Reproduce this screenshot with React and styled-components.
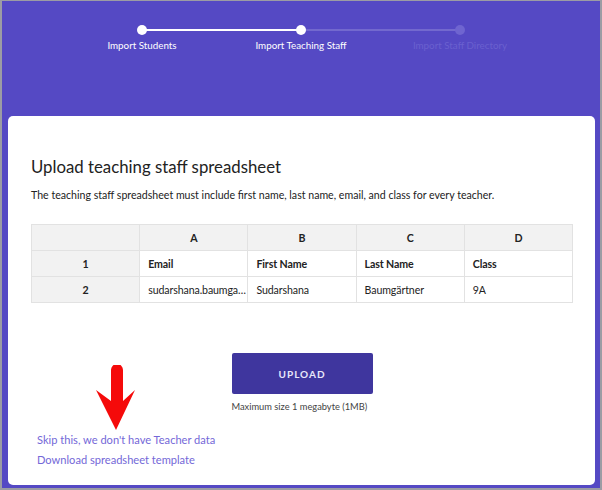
import styled, { createGlobalStyle } from 'styled-components';

const GlobalStyle = createGlobalStyle`
  * { box-sizing: border-box; }
  body {
    margin: 0;
    font-family: Lato, "Open Sans", sans-serif;
  }
`;

const Frame = styled.div`
  width: 602px;
  height: 490px;
  border: 2px solid #9c9ca4;
  border-top-width: 1px;
  background-color: #5549c4;
  display: flex;
  flex-direction: column;
  overflow: hidden;
`;

const Stepper = styled.div`
  display: flex;
  justify-content: center;
  padding-top: 24px;
  height: 115px;
`;

const Step = styled.div`
  position: relative;
  width: 159px;
  display: flex;
  flex-direction: column;
  align-items: center;
`;

const Track = styled.div`
  position: absolute;
  top: 4px;
  left: 50%;
  width: 159px;
  height: 2px;
  background-color: ${(p) => (p.done ? '#ffffff' : 'rgba(255, 255, 255, 0.18)')};
`;

const Dot = styled.span`
  position: relative;
  z-index: 1;
  width: 10px;
  height: 10px;
  border-radius: 50%;
  background-color: ${(p) => (p.active ? '#ffffff' : '#6f65d0')};
`;

const StepLabel = styled.span`
  margin-top: 4px;
  font-size: 9.8px;
  color: ${(p) => (p.active ? '#ffffff' : '#6a60cf')};
  white-space: nowrap;
`;

const Card = styled.div`
  position: relative;
  flex: 1;
  margin: 0 5px 3px 6px;
  background: #ffffff;
  border-radius: 5px;
  padding: 40px 22px 0 23px;
`;

const Title = styled.h1`
  margin: 0;
  font-size: 16.8px;
  font-weight: 400;
  color: #222222;
`;

const Description = styled.p`
  margin: 12px 0 0;
  font-size: 10.6px;
  color: #222222;
`;

const Sheet = styled.table`
  margin-top: 23px;
  width: 542px;
  table-layout: fixed;
  border-collapse: collapse;
  font-size: 10.6px;
  letter-spacing: -0.1px;
  color: #222222;
`;

const Cell = styled.td`
  height: 26px;
  border: 1px solid #e2e2e2;
  padding: 0 ${(p) => (p.center ? '0' : '8px')};
  text-align: ${(p) => (p.center ? 'center' : 'left')};
  font-weight: ${(p) => (p.bold ? 700 : 400)};
  background-color: ${(p) => (p.shade ? '#f2f2f2' : '#ffffff')};
  white-space: nowrap;
`;

const UploadArea = styled.div`
  display: flex;
  justify-content: center;
  margin-top: 50px;
`;

const UploadBlock = styled.div`
  display: flex;
  flex-direction: column;
  align-items: flex-start;
`;

const UploadButton = styled.button`
  width: 141px;
  height: 41px;
  border: none;
  border-radius: 2px;
  background-color: #3f369e;
  color: #e8e6fa;
  font-family: inherit;
  font-size: 10px;
  font-weight: 700;
  letter-spacing: 1px;
`;

const Note = styled.span`
  margin-top: 7px;
  font-size: 9.3px;
  color: #444444;
`;

const Links = styled.div`
  display: flex;
  flex-direction: column;
  gap: 7px;
  margin-top: 21px;
  padding-left: 6px;
`;

const TextLink = styled.a`
  font-size: 11.1px;
  color: #7468d8;
  text-decoration: none;
`;

const Pointer = styled.svg`
  position: absolute;
  left: 87px;
  top: 249px;
`;

const steps = [
  { label: 'Import Students', active: true, track: true, done: true },
  { label: 'Import Teaching Staff', active: true, track: true, done: false },
  { label: 'Import Staff Directory', active: false, track: false },
];

const rows = [
  ['1', 'Email', 'First Name', 'Last Name', 'Class'],
  ['2', 'sudarshana.baumga…', 'Sudarshana', 'Baumgärtner', '9A'],
];

const App = () => (
  <>
    <GlobalStyle />
    <Frame>
      <Stepper>
        {steps.map((s) => (
          <Step key={s.label}>
            {s.track && <Track done={s.done} />}
            <Dot active={s.active} />
            <StepLabel active={s.active}>{s.label}</StepLabel>
          </Step>
        ))}
      </Stepper>
      <Card>
        <Title>Upload teaching staff spreadsheet</Title>
        <Description>
          The teaching staff spreadsheet must include first name, last name, email, and class for every teacher.
        </Description>
        <Sheet>
          <tbody>
            <tr>
              <Cell shade />
              {['A', 'B', 'C', 'D'].map((c) => (
                <Cell key={c} shade center bold>
                  {c}
                </Cell>
              ))}
            </tr>
            {rows.map((r, i) => (
              <tr key={r[0]}>
                <Cell shade center bold>
                  {r[0]}
                </Cell>
                {r.slice(1).map((v) => (
                  <Cell key={v} bold={i === 0}>
                    {v}
                  </Cell>
                ))}
              </tr>
            ))}
          </tbody>
        </Sheet>
        <UploadArea>
          <UploadBlock>
            <UploadButton>UPLOAD</UploadButton>
            <Note>Maximum size 1 megabyte (1MB)</Note>
          </UploadBlock>
        </UploadArea>
        <Links>
          <TextLink href="#">Skip this, we don't have Teacher data</TextLink>
          <TextLink href="#">Download spreadsheet template</TextLink>
        </Links>
        <Pointer width="42" height="66" viewBox="0 0 42 66">
          <path d="M16 5 a6 6 0 0 1 12 0 V36 L40 25 L21 65 L1 25 L16 36 Z" fill="#f50a0a" />
        </Pointer>
      </Card>
    </Frame>
  </>
);

export default App;
